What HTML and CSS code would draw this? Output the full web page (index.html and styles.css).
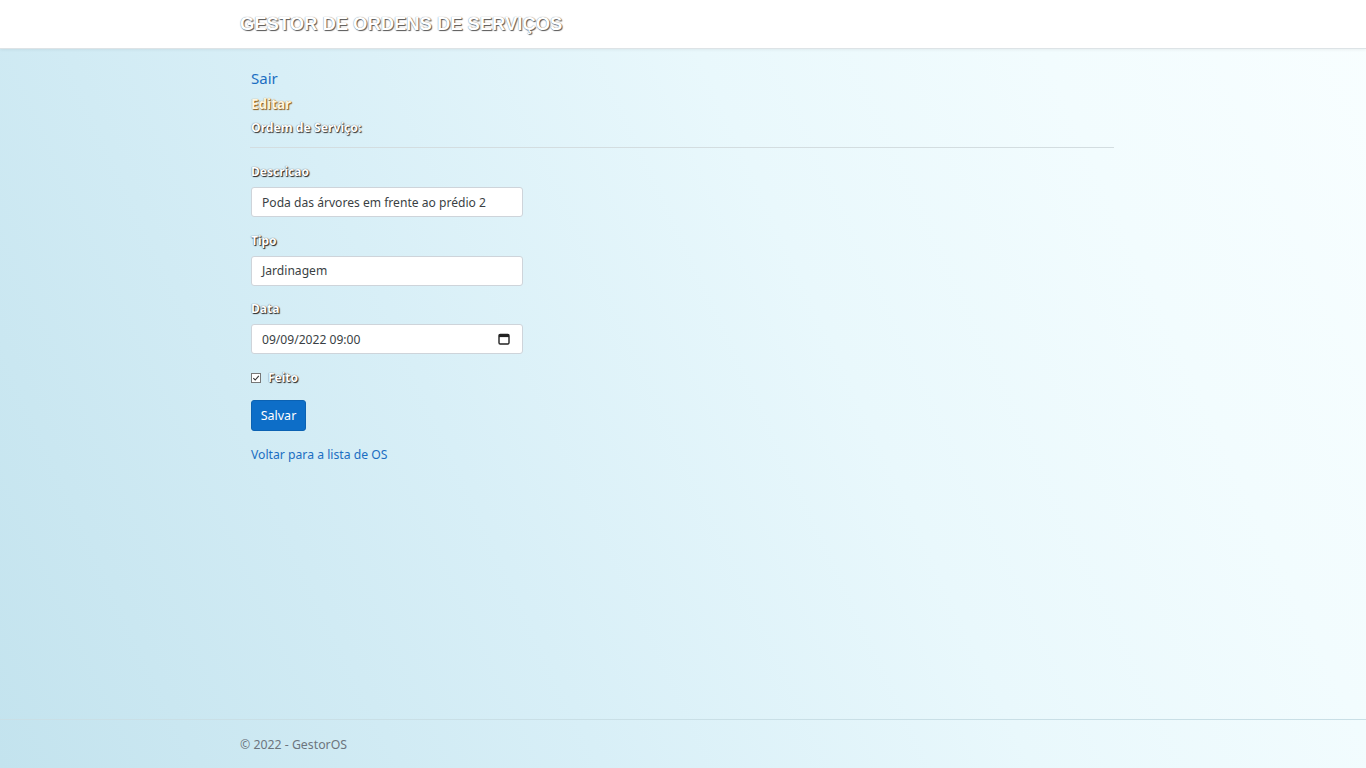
FILE: index.html
```html
<!DOCTYPE html>
<html lang="pt-BR">
<head>
<meta charset="utf-8">
<title>Editar - GestorOS</title>
<link rel="stylesheet" href="styles.css">
</head>
<body>
<header class="topbar">
  <div class="topbar-inner">
    <span class="brand">GESTOR DE ORDENS DE SERVIÇOS</span>
  </div>
</header>
<main class="main">
  <a class="logout" href="#">Sair</a>
  <h1 class="title-edit">Editar</h1>
  <h4 class="title-sub">Ordem de Serviço:</h4>
  <hr class="divider">
  <form class="form">
    <div class="group">
      <label class="label">Descricao</label>
      <div class="field">Poda das árvores em frente ao prédio 2</div>
    </div>
    <div class="group">
      <label class="label">Tipo</label>
      <div class="field">Jardinagem</div>
    </div>
    <div class="group">
      <label class="label">Data</label>
      <div class="field field-date">
        <span>09/09/2022 09:00</span>
        <svg class="cal" width="12" height="12" viewBox="0 0 12 12"><rect x="1" y="1.5" width="10" height="9.5" rx="1.2" fill="none" stroke="#222" stroke-width="1.4"/><rect x="1" y="1.5" width="10" height="2.6" fill="#222"/></svg>
      </div>
    </div>
    <div class="check-row">
      <span class="check"><svg width="10" height="10" viewBox="0 0 10 10"><rect x="0.5" y="0.5" width="9" height="9" fill="#fff" stroke="#777"/><path d="M2.3 5.2 L4.2 7 L7.8 2.8" fill="none" stroke="#333" stroke-width="1.1"/></svg></span>
      <span class="label check-label">Feito</span>
    </div>
    <button type="button" class="btn">Salvar</button>
  </form>
  <a class="back" href="#">Voltar para a lista de OS</a>
</main>
<footer class="footer">
  <div class="footer-inner">© 2022 - GestorOS</div>
</footer>
</body>
</html>
```
FILE: styles.css
```css
* { box-sizing: border-box; }
html, body { margin: 0; padding: 0; }
body {
  min-height: 100vh;
  display: flex;
  flex-direction: column;
  font-family: "Noto Sans", "Open Sans", sans-serif;
  font-size: 12.5px;
  color: #212529;
  background: linear-gradient(65deg, #c3e3ee 0%, #d8eff7 35%, #e9f8fc 60%, #f2fcfe 80%, #f8feff 100%);
}
.topbar {
  height: 49px;
  background: #fff;
  border-bottom: 1px solid #dde3e6;
  box-shadow: 0 1px 3px rgba(0,0,0,0.06);
}
.topbar-inner {
  width: 886px;
  margin: 0 auto;
  height: 48px;
  display: flex;
  align-items: center;
}
.brand {
  font-family: "Liberation Sans", Arial, sans-serif;
  font-weight: bold;
  font-size: 18.4px;
  color: #fff;
  text-shadow: 1px 1px 1px #555, 0 0 1px #777;
}
.main {
  width: 886px;
  margin: 0 auto;
  padding: 17px 12px 0 11px;
  flex: 1;
}
.logout {
  display: block;
  font-size: 15px;
  line-height: 24px;
  color: #1b6ec2;
  text-decoration: none;
}
.title-edit {
  margin: 4px 0 0;
  font-size: 13.5px;
  line-height: 20px;
  font-weight: bold;
  color: #fff6e0;
  text-shadow: 1px 1px 1px #8a5a1c, 0 0 1px #b07a30;
}
.title-sub {
  margin: 4px 0 0;
  font-size: 12.2px;
  line-height: 20px;
  font-weight: bold;
  color: #fff;
  text-shadow: 1px 1px 1px #333, 0 0 1px #555;
}
.divider {
  margin: 9px 0 14px -1px;
  border: 0;
  border-top: 1px solid #d3dde0;
}
.form { display: flex; flex-direction: column; align-items: flex-start; }
.group { margin-bottom: 13.5px; }
.label {
  display: block;
  font-size: 12px;
  line-height: 20px;
  font-weight: bold;
  color: #fff;
  text-shadow: 1px 1px 1px #222, 0 0 1px #444;
  margin-bottom: 5px;
}
.field {
  width: 272px;
  height: 30px;
  padding: 0 10px;
  display: flex;
  align-items: center;
  background: #fff;
  border: 1px solid #ced4da;
  border-radius: 3px;
  font-size: 12.1px;
  color: #3a3f44;
}
.field-date { justify-content: space-between; padding-right: 12px; }
.cal { display: block; }
.check-row {
  display: flex;
  align-items: center;
  gap: 7px;
  height: 20px;
  margin: 0 0 12px;
}
.check { display: flex; }
.check-label { margin: 0; }
.btn {
  width: 55px;
  height: 31px;
  padding: 0;
  font-family: inherit;
  font-size: 12.5px;
  color: #fff;
  background: #0d6ec8;
  border: 1px solid #0b62b3;
  border-radius: 3px;
}
.back {
  display: block;
  margin-top: 14px;
  font-size: 12.2px;
  line-height: 20px;
  color: #1b6ec2;
  text-decoration: none;
}
.footer {
  height: 49px;
  border-top: 1px solid #c9dfe6;
}
.footer-inner {
  width: 886px;
  margin: 0 auto;
  line-height: 50px;
  font-size: 12.3px;
  color: #6c757d;
}
```
